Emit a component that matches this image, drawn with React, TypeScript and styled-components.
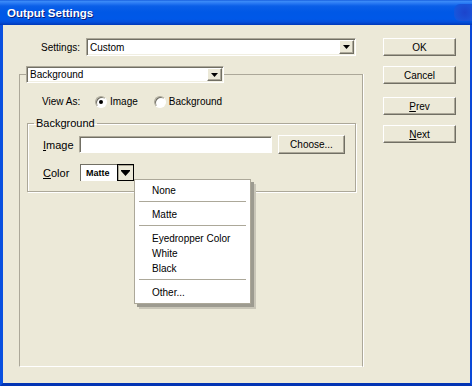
import { createGlobalStyle } from "styled-components"
import styled from "styled-components"

const GlobalStyle = createGlobalStyle`
  html, body {
    margin: 0;
    padding: 0;
    background: #ece9d8;
  }
  body {
    font-family: "Liberation Sans", Arial, sans-serif;
    font-size: 10px;
    color: #000;
  }
  * {
    box-sizing: border-box;
  }
`

const menuItems = [
  ["None"],
  ["Matte"],
  ["Eyedropper Color", "White", "Black"],
  ["Other..."],
]

const Arrow = () => (
  <svg width="7" height="4" viewBox="0 0 7 4">
    <path d="M0 0h7L3.5 4z" fill="#000" />
  </svg>
)

const App = () => {
  return (
    <>
      <GlobalStyle />
      <Window>
        <TitleBar>
          <Title>Output Settings</Title>
          <TitleButton />
        </TitleBar>
        <Frame>
          <LeftColumn>
            <SettingsRow>
              <SettingsLabel>Settings:</SettingsLabel>
              <Select $width={270} $height={18}>
                <SelectText>Custom</SelectText>
                <ArrowButton>
                  <Arrow />
                </ArrowButton>
              </Select>
            </SettingsRow>

            <OuterGroup>
              <OuterLegend>
                <Select $width={198} $height={17}>
                  <SelectText>Background</SelectText>
                  <ArrowButton>
                    <Arrow />
                  </ArrowButton>
                </Select>
              </OuterLegend>

              <ViewRow>
                <ViewLabel>View As:</ViewLabel>
                <Radio $checked />
                <RadioText>Image</RadioText>
                <Radio />
                <RadioText>Background</RadioText>
              </ViewRow>

              <InnerGroup>
                <InnerLegend>Background</InnerLegend>
                <FieldRow>
                  <FieldLabel>
                    <u>I</u>mage
                  </FieldLabel>
                  <TextInput />
                  <Button $width={67} $height={19}>
                    Choose...
                  </Button>
                </FieldRow>
                <FieldRow $top={9}>
                  <FieldLabel>
                    <u>C</u>olor
                  </FieldLabel>
                  <ColorPicker>
                    <Swatch>Matte</Swatch>
                    <SwatchButton>
                      <svg width="9" height="6" viewBox="0 0 9 6">
                        <path d="M0 0h9v1H0zM0 1h9L4.5 6z" fill="#000" />
                      </svg>
                    </SwatchButton>
                    <Menu>
                      {menuItems.map((group, i) => (
                        <MenuGroup key={i}>
                          {i > 0 && <Separator />}
                          {group.map((item) => (
                            <MenuItem key={item}>{item}</MenuItem>
                          ))}
                        </MenuGroup>
                      ))}
                    </Menu>
                  </ColorPicker>
                </FieldRow>
              </InnerGroup>
            </OuterGroup>
          </LeftColumn>

          <RightColumn>
            <Button $width={73} $height={18}>
              OK
            </Button>
            <Button $width={73} $height={18} $top={10}>
              Cancel
            </Button>
            <Button $width={73} $height={18} $top={13}>
              <u>P</u>rev
            </Button>
            <Button $width={73} $height={18} $top={10}>
              <u>N</u>ext
            </Button>
          </RightColumn>
        </Frame>
      </Window>
    </>
  )
}

export default App

const Window = styled.div`
  width: 472px;
  height: 386px;
  display: flex;
  flex-direction: column;
  background: #ece9d8;
  overflow: hidden;
`

const TitleBar = styled.div`
  height: 25px;
  display: flex;
  align-items: center;
  padding-left: 7px;
  background: linear-gradient(
    #0a4fd6 0,
    #3d8df8 1px,
    #2c7cf4 3px,
    #0a5fe8 6px,
    #0058e6 12px,
    #0058e8 19px,
    #0450dc 22px,
    #0038b8 25px
  );
`

const Title = styled.div`
  font-family: "Liberation Sans", Arial, sans-serif;
  font-weight: bold;
  font-size: 11.5px;
  color: #fff;
  text-shadow: 1px 1px 0 #0a1e7a;
  padding-top: 1px;
`

const TitleButton = styled.div`
  margin-left: auto;
  width: 18px;
  height: 17px;
  border-radius: 6px 0 0 6px;
  background: radial-gradient(circle at 60% 50%, #1c44cc 0, #1a52d8 60%, #0a5ce6 100%);
`

const Frame = styled.div`
  flex: 1;
  display: flex;
  gap: 20px;
  padding: 13px 14px 0 16px;
  border-left: 3px solid #0a50e0;
  border-right: 2px solid #0a48d8;
  border-bottom: 3px solid #0234b4;
  box-shadow: inset 1px 0 0 #ece9d8;
`

const LeftColumn = styled.div`
  width: 344px;
  display: flex;
  flex-direction: column;
`

const RightColumn = styled.div`
  display: flex;
  flex-direction: column;
`

const SettingsRow = styled.div`
  display: flex;
  align-items: center;
  gap: 6px;
  height: 18px;
`

const SettingsLabel = styled.span`
  width: 61px;
  text-align: right;
`

const Select = styled.div<{ $width: number; $height: number }>`
  width: ${({ $width }) => $width}px;
  height: ${({ $height }) => $height}px;
  display: flex;
  align-items: stretch;
  background: #fff;
  border: 1px solid;
  border-color: #aca899 #fff #fff #aca899;
  box-shadow: inset 1px 1px 0 #716f64, inset -1px -1px 0 #f1efe2;
  padding: 1px;
`

const SelectText = styled.span`
  flex: 1;
  display: flex;
  align-items: center;
  padding-left: 2px;
  font-size: 10px;
`

const ArrowButton = styled.span`
  width: 15px;
  display: flex;
  align-items: center;
  justify-content: center;
  background: #ece9d8;
  border: 1px solid;
  border-color: #fff #716f64 #716f64 #fff;
  box-shadow: inset -1px -1px 0 #aca899;
`

const Button = styled.button<{ $width: number; $height: number; $top?: number }>`
  width: ${({ $width }) => $width}px;
  height: ${({ $height }) => $height}px;
  margin-top: ${({ $top }) => $top ?? 0}px;
  padding: 0;
  font-family: "Liberation Sans", Arial, sans-serif;
  font-size: 10px;
  color: #000;
  background: #ece9d8;
  border: 1px solid;
  border-color: #fff #716f64 #716f64 #fff;
  box-shadow: inset -1px -1px 0 #aca899;
  display: flex;
  align-items: center;
  justify-content: center;
  flex-shrink: 0;
`

const OuterGroup = styled.fieldset`
  margin: 10px 0 0;
  padding: 0;
  height: 301px;
  border: 1px solid #aca899;
  border-bottom-color: #fff;
  box-shadow: 1px 0 0 #fff;
  min-width: 0;
`

const OuterLegend = styled.legend`
  margin-left: 6px;
  padding: 0;
`

const ViewRow = styled.div`
  display: flex;
  align-items: center;
  height: 13px;
  margin-top: 12px;
  padding-left: 22px;
`

const ViewLabel = styled.span`
  width: 53px;
`

const Radio = styled.span<{ $checked?: boolean }>`
  width: 12px;
  height: 12px;
  border-radius: 50%;
  background: #fff;
  border: 1px solid;
  border-color: #aca899 #fff #fff #aca899;
  box-shadow: inset 1px 1px 0 #716f64;
  display: flex;
  align-items: center;
  justify-content: center;
  &::after {
    content: "";
    width: 4px;
    height: 4px;
    border-radius: 50%;
    background: #000;
    display: ${({ $checked }) => ($checked ? "block" : "none")};
  }
`

const RadioText = styled.span`
  margin-left: 3px;
  margin-right: 16px;
`

const InnerGroup = styled.fieldset`
  margin: 9px 0 0 7px;
  padding: 0 0 9px;
  width: 329px;
  border: 1px solid #aca899;
  box-shadow: 1px 1px 0 #fff, inset 1px 1px 0 #fff;
  min-width: 0;
`

const InnerLegend = styled.legend`
  margin-left: 6px;
  padding: 0 2px;
  font-size: 11px;
  line-height: 12px;
`

const FieldRow = styled.div<{ $top?: number }>`
  display: flex;
  align-items: center;
  gap: 6px;
  margin-top: ${({ $top }) => $top ?? 6}px;
  padding-left: 15px;
  height: 19px;
`

const FieldLabel = styled.span`
  width: 30px;
  font-size: 11px;
`

const TextInput = styled.div`
  width: 193px;
  height: 17px;
  background: #fff;
  border: 1px solid;
  border-color: #aca899 #fff #fff #aca899;
  box-shadow: inset 1px 1px 0 #716f64;
`

const ColorPicker = styled.div`
  position: relative;
  display: flex;
  height: 17px;
  margin-left: 1px;
`

const Swatch = styled.span`
  width: 37px;
  display: flex;
  align-items: center;
  padding-left: 5px;
  font-size: 9px;
  font-weight: bold;
  background: #fff;
  border-left: 1px solid #716f64;
  border-top: 1px solid #716f64;
`

const SwatchButton = styled.span`
  width: 17px;
  display: flex;
  align-items: center;
  justify-content: center;
  background: #ece9d8;
  border: 1px solid #000;
  box-shadow: inset 1px 1px 0 #aca899;
`

const Menu = styled.div`
  position: absolute;
  left: 100%;
  top: calc(100% - 2px);
  width: 117px;
  padding: 3px 0;
  background: #fff;
  border: 1px solid #aca899;
  box-shadow: 3px 3px 0 #9d9b90, 5px 5px 0 #c9c6b8;
  z-index: 2;
`

const MenuGroup = styled.div`
  display: flex;
  flex-direction: column;
`

const Separator = styled.div`
  height: 1px;
  margin: 3px 4px 5px;
  background: #aca899;
`

const MenuItem = styled.div`
  height: 15px;
  line-height: 15px;
  padding-left: 17px;
  font-size: 10px;
`
